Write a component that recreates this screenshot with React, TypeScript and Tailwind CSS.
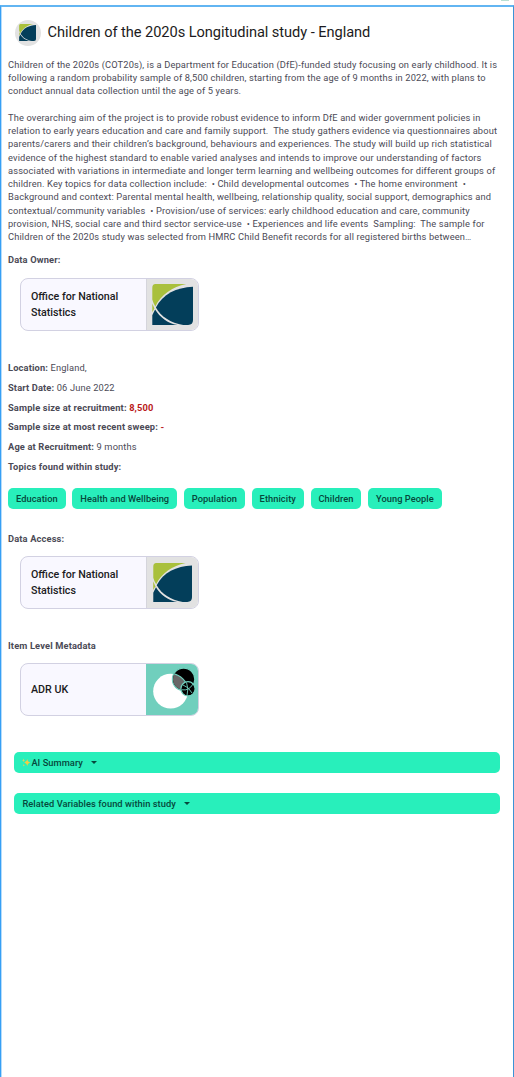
import React from "react";

const summary = [
  "Children of the 2020s (COT20s), is a Department for Education (DfE)-funded study focusing on early childhood. It is",
  "following a random probability sample of 8,500 children, starting from the age of 9 months in 2022, with plans to",
  "conduct annual data collection until the age of 5 years.",
  " ",
  "The overarching aim of the project is to provide robust evidence to inform DfE and wider government policies in",
  "relation to early years education and care and family support.  The study gathers evidence via questionnaires about",
  "parents/carers and their children’s background, behaviours and experiences. The study will build up rich statistical",
  "evidence of the highest standard to enable varied analyses and intends to improve our understanding of factors",
  "associated with variations in intermediate and longer term learning and wellbeing outcomes for different groups of",
  "children. Key topics for data collection include:  • Child developmental outcomes  • The home environment  •",
  "Background and context: Parental mental health, wellbeing, relationship quality, social support, demographics and",
  "contextual/community variables  • Provision/use of services: early childhood education and care, community",
  "provision, NHS, social care and third sector service-use  • Experiences and life events  Sampling:  The sample for",
  "Children of the 2020s study was selected from HMRC Child Benefit records for all registered births between…",
];

const topics = ["Education", "Health and Wellbeing", "Population", "Ethnicity", "Children", "Young People"];

function StatsLogo({ className }: { className: string }) {
  return (
    <svg viewBox="0 0 42 42" className={className}>
      <path d="M3.5 0H35C21 3 9 11 3.4 23Q1 19 .3 16V4Q.3 0 3.5 0Z" fill="#a9c03c" />
      <path d="M.3 20L2.5 25L.3 29Z" fill="#a9c03c" />
      <path d="M42 2.7V37Q42 42 37 42H32C19 40 9 33 4 24C11 10 25 3.5 42 2.7Z" fill="#033e5a" />
      <path d="M3.2 26C8 34 16 40 26 42H.3V32Z" fill="#033e5a" />
    </svg>
  );
}

function AdrLogo() {
  return (
    <svg viewBox="0 0 52 52" className="h-[52px] w-[52px]">
      <circle cx="24.6" cy="27.2" r="17.4" fill="#fff" />
      <circle cx="37.6" cy="15.3" r="11.2" fill="#000" stroke="#70cfbd" strokeWidth="1.2" />
      <clipPath id="overlap"><circle cx="37.6" cy="15.3" r="10.6" /></clipPath>
      <circle cx="24.6" cy="27.2" r="17.4" fill="#686868" stroke="#70cfbd" strokeWidth="1.2" clipPath="url(#overlap)" />
      <circle cx="42" cy="24.8" r="7.1" fill="#000" stroke="#70cfbd" strokeWidth="1.2" />
      <path d="M36 25.8Q43 27 47 20M40.5 18.5Q43 25 41 31.5M37 21Q43 23 46 29" fill="none" stroke="#70cfbd" strokeWidth="0.9" />
    </svg>
  );
}

function OrgCard({ name, className = "", children }: { name: string; className?: string; children: React.ReactNode }) {
  return (
    <div className={`ml-3 flex h-[53px] w-[178.5px] overflow-hidden rounded-[8px] border border-[#d2d1e2] bg-[#f9f8ff] ${className}`}>
      <div className="flex w-[125px] items-center pt-[1.5px] pl-[10px] text-[10.7px] leading-[16px] font-medium tracking-normal text-[#1b1b22]">
        <span className="w-[100px]">{name}</span>
      </div>
      {children}
    </div>
  );
}

function StatsTile({ small = false }: { small?: boolean }) {
  return (
    <div className="flex flex-1 items-center justify-center border-l border-[#d5d5dc] bg-[#e2e2e2]">
      <StatsLogo className={small ? "h-[39px] w-[39px]" : "h-[41px] w-[41px]"} />
    </div>
  );
}

function Fact({ label, children }: { label: string; children?: React.ReactNode }) {
  return (
    <div className="h-[19.9px]">
      <b className="font-bold">{label}</b> {children}
    </div>
  );
}

function Bar({ children }: { children: React.ReactNode }) {
  return (
    <button className="flex h-[21px] w-[486px] items-center rounded-[5px] bg-[#28efbb] pl-2 text-[9.31px] font-medium tracking-[0.05px] text-[#06483c]">
      {children}
      <svg viewBox="0 0 6 3" className="ml-[8.5px] h-[3px] w-[6px]"><path d="M0 0H6L3 3Z" fill="#06483c" /></svg>
    </button>
  );
}

export default function App() {
  return (
    <div className="h-[1077px] w-[514px] overflow-hidden bg-white font-['Roboto',sans-serif]">
      <div className="flex h-[5px] justify-end pr-[5px]">
        <div className="h-px w-2 bg-[#b9dfd3]" />
      </div>
      <div className="h-[1072px] border-t-2 border-r border-l border-t-[#62b5f2] border-r-[#3b93d6] border-l-[#369ff5]">
        <div className="h-full border-l border-[#b5dcfa] pl-[6px] text-[9.31px] leading-[13.24px] tracking-[0.14px] text-[#4b4a56]">
          <header className="flex h-[51px] items-center gap-[7px] pl-[6.5px]">
            <div className="flex h-[26px] w-[26px] items-center justify-center rounded-full bg-[#e2e2e2]">
              <StatsLogo className="h-[17px] w-[17px]" />
            </div>
            <h1 className="text-[14.63px] leading-[19px] font-normal tracking-[-0.06px] whitespace-nowrap text-[#1c1b21]">
              Children of the 2020s Longitudinal study - England
            </h1>
          </header>
          <div className="h-[185px]">
            {summary.map((line, i) => <div key={i} className="whitespace-pre">{line}</div>)}
          </div>
          <h2 className="mt-[10px] h-[13.3px] font-bold">Data Owner:</h2>
          <OrgCard name="Office for National Statistics" className="mt-[11.7px]"><StatsTile /></OrgCard>
          <div className="mt-[29.8px]">
            <Fact label="Location:">England,</Fact>
            <Fact label="Start Date:">06 June 2022</Fact>
            <Fact label="Sample size at recruitment:"><b className="text-[#ba1a1a]">8,500</b></Fact>
            <Fact label="Sample size at most recent sweep:"><b className="text-[#ba1a1a]">-</b></Fact>
            <Fact label="Age at Recruitment:">9 months</Fact>
            <Fact label="Topics found within study:" />
          </div>
          <div className="mt-[7.8px] flex gap-[6.6px]">
            {topics.map((topic) => (
              <span key={topic} className="flex h-[21px] items-center rounded-[5px] bg-[#28efbb] px-2 font-medium tracking-[0.04px] whitespace-nowrap text-[#06483c]">{topic}</span>
            ))}
          </div>
          <h2 className="mt-[22.9px] h-[13px] font-bold">Data Access:</h2>
          <OrgCard name="Office for National Statistics" className="mt-[11px]"><StatsTile small /></OrgCard>
          <h2 className="mt-[30px] h-[13px] font-bold">Item Level Metadata</h2>
          <OrgCard name="ADR UK" className="mt-[11px]">
            <div className="flex-1 bg-[#70cfbd]"><AdrLogo /></div>
          </OrgCard>
          <div className="mt-[36px] flex flex-col gap-5 pl-[6.4px]">
            <Bar>
              <svg viewBox="0 0 9 9" className="h-[9px] w-[9px]">
                <path d="M5.3 1Q5.6 4 8.5 4.5Q5.6 5 5.3 8Q4.9 5 2.2 4.5Q4.9 4 5.3 1Z" fill="#f4cc42" />
                <path d="M1.5 .5L2 2L3.2 2.4L2 2.8L1.5 4L1 2.8L0 2.4L1 2ZM1.8 6L2.2 7L3 7.3L2.2 7.6L1.8 8.5L1.4 7.6L.6 7.3L1.4 7Z" fill="#ddd65a" />
              </svg>
              AI Summary
            </Bar>
            <Bar>Related Variables found within study</Bar>
          </div>
        </div>
      </div>
    </div>
  );
}
